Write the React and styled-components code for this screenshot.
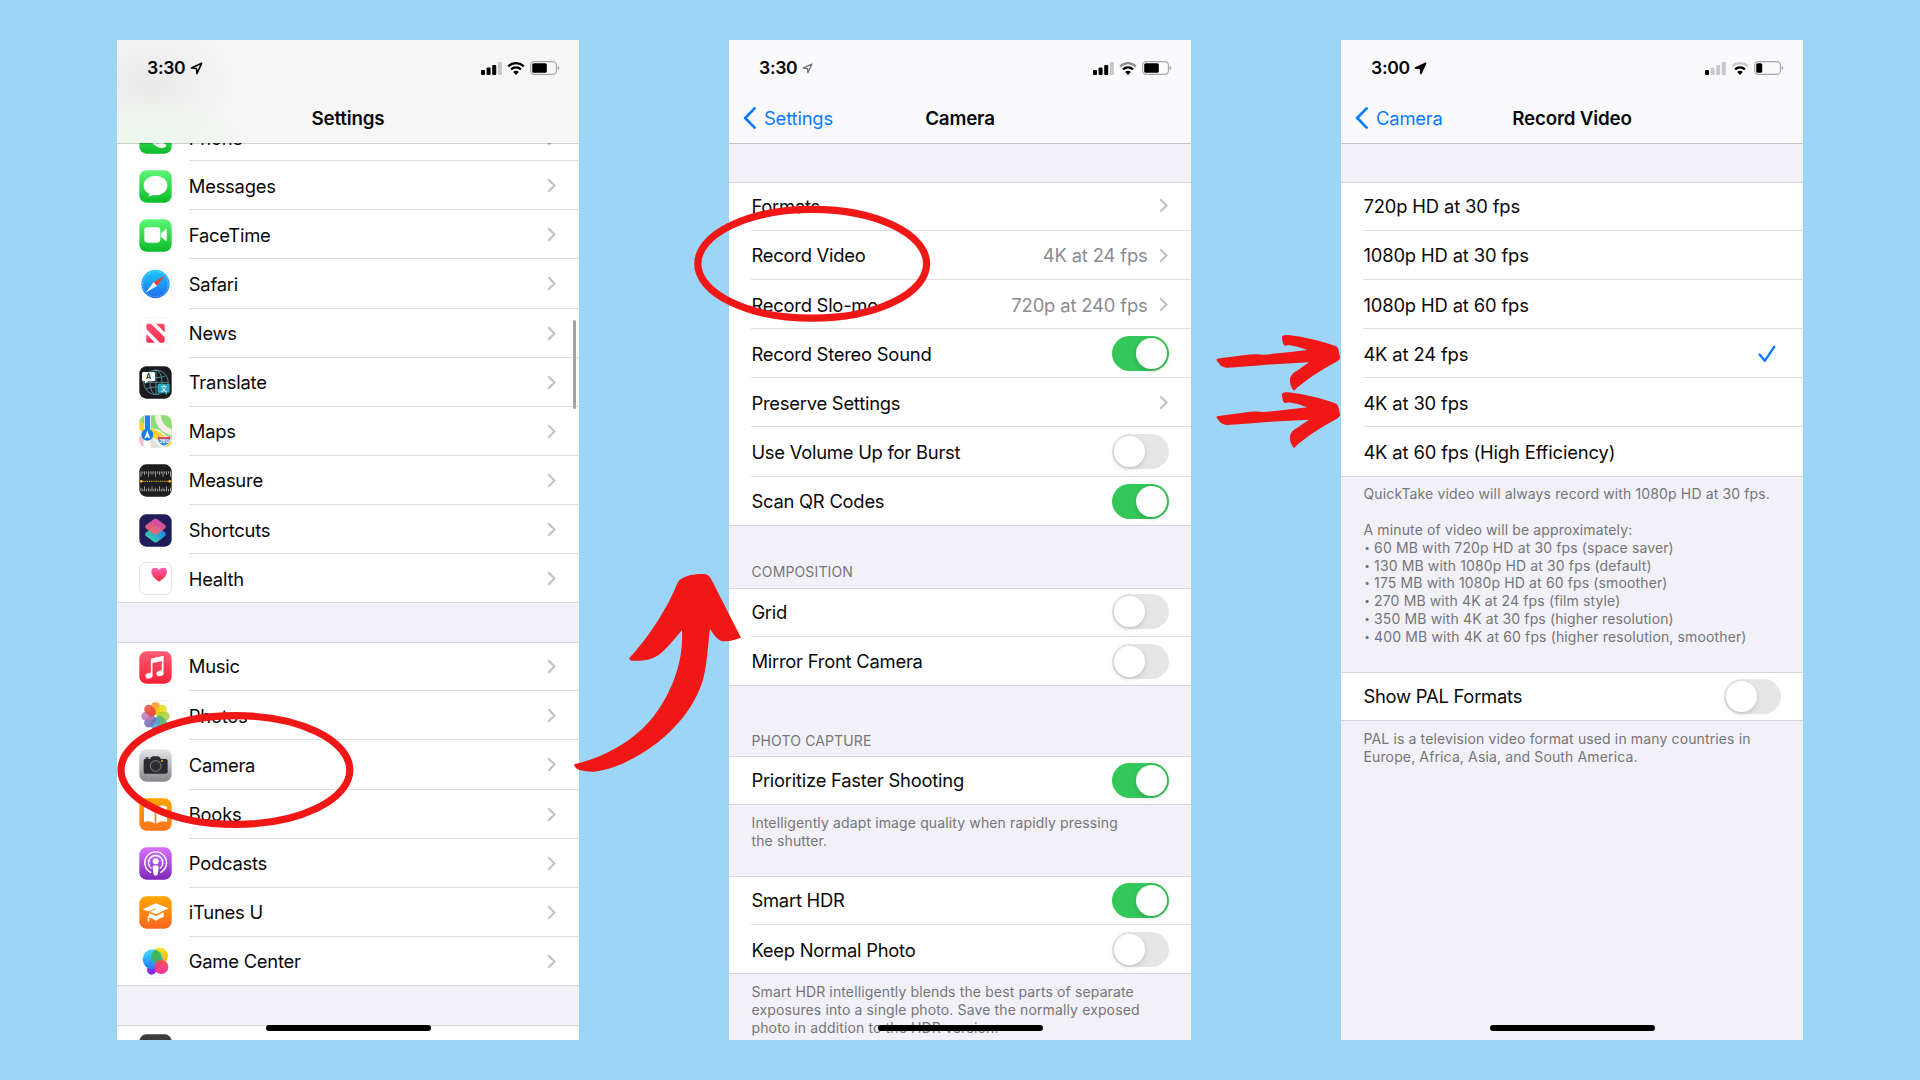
import React from "react";
import styled, { createGlobalStyle, css } from "styled-components";

const GlobalStyle = createGlobalStyle`
  * { box-sizing: border-box; }
  body { margin: 0; background: #9dd5f7; }
`;

const ROW = 49.13;

const Canvas = styled.main`
  position: relative;
  width: 1920px;
  height: 1080px;
  padding: 40px 117px;
  display: flex;
  gap: 150px;
  overflow: hidden;
  background: #9dd5f7;
  color: #0a0a0a;
  font-family: Inter, "Liberation Sans", sans-serif;
`;

const Phone = styled.section`
  position: relative;
  flex: none;
  display: flex;
  flex-direction: column;
  width: 462px;
  height: 1000px;
  overflow: hidden;
  background: #f2f1f7;
`;

const Header = styled.header`
  position: relative;
  z-index: 1;
  flex: none;
  height: 104px;
  border-bottom: 1px solid rgba(0, 0, 0, 0.19);
  background: ${(p) =>
    p.$tinted
      ? `radial-gradient(ellipse 100px 50px at 34px 104px, #e9f8ea 0%, rgba(233,248,234,0) 100%),
         radial-gradient(ellipse 80px 60px at 36px 44px, #ebe9e9 0%, rgba(235,233,233,0) 100%), #f6f6f6`
      : "#fafafc"};
  background-clip: padding-box;
`;

const StatusBar = styled.div`
  display: flex;
  align-items: center;
  height: 56px;
  padding: 0 19px 0 30px;
`;

const Time = styled.span`
  width: 43px;
  font-size: 17.6px;
  font-weight: 600;
  letter-spacing: -0.3px;
  line-height: 20px;
`;

const StatusIcons = styled.div`
  display: flex;
  align-items: center;
  gap: 5px;
  margin-left: auto;
`;

const NavBar = styled.div`
  display: grid;
  grid-template-columns: 1fr auto 1fr;
  align-items: center;
  height: 44px;
`;

const Title = styled.h1`
  grid-column: 2;
  margin: 0;
  padding-top: 2px;
  font-size: 18.8px;
  font-weight: 600;
  letter-spacing: -0.2px;
  line-height: 24px;
`;

const Back = styled.span`
  display: flex;
  align-items: center;
  gap: 8px;
  padding-left: 14px;
  color: #0a7aff;
  font-size: 18.4px;
  letter-spacing: -0.18px;
  line-height: 24px;
`;

const Group = styled.div`
  flex: none;
  margin-top: ${(p) => p.$offset || 0}px;
  background: #fff;
`;

const RowBody = styled.div`
  flex: 1;
  display: flex;
  align-items: center;
  height: 100%;
  padding: 1px 22px 0 0;
`;

const AppIcon = styled.svg`
  flex: none;
  width: 33px;
  height: 33px;
  margin: 1px 16.4px 0 0;
`;

const Row = styled.div`
  display: flex;
  align-items: center;
  height: ${ROW}px;
  padding-left: 22.4px;
  ${RowBody} {
    border-bottom: 1px solid #dededf;
  }
  &:first-child {
    border-top: 1px solid #d6d6da;
    ${RowBody} {
      padding: ${(p) => (p.$tucked ? "3px 22px 0 0" : "0 22px 1px 0")};
    }
  }
  &:last-child {
    border-bottom: 1px solid #d6d6da;
    ${RowBody} {
      border-bottom: 0;
    }
  }
`;

const Label = styled.span`
  font-size: 18.4px;
  letter-spacing: ${(p) => (p.$numeric ? -0.15 : -0.24)}px;
  line-height: 24px;
  white-space: nowrap;
`;

const Value = styled(Label)`
  margin-left: auto;
  margin-right: 11.4px;
  color: #8c8c90;
`;

const Trailing = styled.span`
  display: flex;
  margin-left: ${(p) => (p.$tight ? 0 : "auto")};
  margin-right: ${(p) => p.$inset || 0}px;
`;

const Switch = styled.span`
  display: flex;
  align-items: center;
  justify-content: ${(p) => (p.$on ? "flex-end" : "flex-start")};
  width: 57px;
  height: 35px;
  padding: 2px;
  border-radius: 18px;
  background: ${(p) => (p.$on ? "#34c759" : "#e6e6e6")};
`;

const Knob = styled.span`
  width: 31px;
  height: 31px;
  border-radius: 50%;
  background: #fff;
  box-shadow: 0 2px 5px rgba(0, 0, 0, 0.16);
`;

const Spacer = styled.div`
  flex: none;
  height: ${(p) => p.$h}px;
`;

const noteText = css`
  color: #75757a;
  font-size: 14px;
  line-height: 17.87px;
`;

const SectionTitle = styled.h2`
  ${noteText}
  flex: none;
  display: flex;
  align-items: flex-end;
  height: ${(p) => p.$h}px;
  margin: 0;
  padding: 0 22.5px 6.6px;
  font-weight: 400;
  letter-spacing: 0.13px;
  text-transform: uppercase;
`;

const Note = styled.div`
  ${noteText}
  flex: none;
  height: ${(p) => (p.$h ? `${p.$h}px` : "auto")};
  padding: 8.6px 0 0 22.5px;
  letter-spacing: 0.13px;
  white-space: pre;
`;

const NoteLine = styled.div`
  display: flex;
  align-items: center;
  height: 17.87px;
`;

const Bullet = styled.span`
  width: 10.6px;
  padding-left: 0.8px;
  font-size: 10px;
`;

const HomeIndicator = styled.div`
  position: absolute;
  left: 148.7px;
  bottom: 9px;
  z-index: 2;
  width: 165px;
  height: 6px;
  border-radius: 3px;
  background: #000;
`;

const ScrollThumb = styled.div`
  position: absolute;
  right: 3px;
  top: 280px;
  width: 3px;
  height: 89px;
  border-radius: 2px;
  background: #a3a3a5;
`;

const Markup = styled.svg`
  position: absolute;
  inset: 0;
  z-index: 3;
  width: 1920px;
  height: 1080px;
`;

const Chevron = () => (
  <svg width="9" height="15" viewBox="0 0 9 15">
    <path d="M1.2 1.2 L7.6 7.5 L1.2 13.8" fill="none" stroke="#c2c2c5" strokeWidth="2.1" />
  </svg>
);

const BackChevron = () => (
  <svg width="13" height="22" viewBox="0 0 13 22">
    <path d="M11.6 1.4 L2.2 11 L11.6 20.6" fill="none" stroke="#0a7aff" strokeWidth="2.7" strokeLinecap="round" strokeLinejoin="round" />
  </svg>
);

const Check = () => (
  <svg width="18" height="18" viewBox="0 0 18 18">
    <path d="M1.6 9.6 L6.8 15.8 L16.2 1.8" fill="none" stroke="#0a7aff" strokeWidth="2.4" strokeLinecap="round" strokeLinejoin="round" />
  </svg>
);

const LocationArrow = ({ kind }) => {
  const small = kind === "faint";
  return (
    <svg width={small ? 11 : 13} height={small ? 11 : 13} viewBox="0 0 13 13">
      <path
        d="M11.7 1.2 L1.4 6 L6.5 6.6 L6.9 11.6 Z"
        fill={kind === "solid" ? "#000" : "none"}
        stroke={small ? "#6c6c6e" : "#000"}
        strokeWidth="1.5"
        strokeLinejoin="round"
      />
    </svg>
  );
};

const Signal = ({ bars }) => (
  <svg width="21" height="13" viewBox="0 0 21 13">
    {[5, 7.5, 10, 13].map((h, i) => (
      <rect key={h} x={i * 5.6} y={13 - h} width="4" height={h} rx="1" fill={i < bars ? "#000" : "#c8c8ca"} />
    ))}
  </svg>
);

const Wifi = ({ outer }) => (
  <svg width="18" height="13" viewBox="0 0 18 13">
    <path d="M1.2 4.3 A11.2 11.2 0 0 1 16.8 4.3" fill="none" stroke={outer} strokeWidth="2.3" />
    <path d="M4 7.4 A7.2 7.2 0 0 1 14 7.4" fill="none" stroke="#000" strokeWidth="2.2" />
    <path d="M9 13 L6.2 10.1 A4 4 0 0 1 11.8 10.1 Z" fill="#000" />
  </svg>
);

const Battery = ({ level }) => (
  <svg width="30" height="14" viewBox="0 0 30 14">
    <rect x="0.6" y="0.6" width="25.8" height="12.8" rx="3.6" fill="none" stroke="#a6a6a8" strokeWidth="1.1" />
    <rect x="2.2" y="2.2" width={level} height="9.6" rx="1.6" fill="#000" />
    <path d="M27.6 4.8 Q29.4 5.6 29.4 7 Q29.4 8.4 27.6 9.2 Z" fill="#a6a6a8" />
  </svg>
);

const Gradient = ({ id, from, to }) => (
  <linearGradient id={id} x1="0" y1="0" x2="0" y2="1">
    <stop offset="0" stopColor={from} />
    <stop offset="1" stopColor={to} />
  </linearGradient>
);

const Tile = ({ fill, stroke }) => (
  <rect x="1" y="1" width="97" height="97" rx="21" fill={fill} stroke={stroke} strokeWidth={stroke ? 2 : 0} />
);

const PETALS = ["#f7941d", "#e8d80c", "#a5cf3a", "#4fb26a", "#4c9fd6", "#7367b4", "#b277b5", "#ea4335"];
const TICKS = Array.from({ length: 17 }, (_, i) => i);

const ICONS = {
  phone: (
    <>
      <Gradient id="gPhone" from="#5ff777" to="#0bbb29" />
      <Tile fill="url(#gPhone)" />
      <path d="M20 26 Q30 14 38 30 Q42 38 36 42 Q44 58 56 68 Q64 62 72 66 Q88 72 78 79 Q62 86 42 68 Q16 44 20 26Z" fill="#fff" />
    </>
  ),
  messages: (
    <>
      <Gradient id="gMsg" from="#5ff777" to="#0bbb29" />
      <Tile fill="url(#gMsg)" />
      <ellipse cx="49.5" cy="46.5" rx="35.5" ry="29.5" fill="#fff" />
      <path d="M32 66 Q33 75 26 79 Q38 80 46 72Z" fill="#fff" />
    </>
  ),
  facetime: (
    <>
      <Gradient id="gFace" from="#5ff777" to="#0bbb29" />
      <Tile fill="url(#gFace)" />
      <rect x="16" y="25" width="48" height="46" rx="10" fill="#fff" />
      <path d="M66 43 L80 31 Q83 29 83 33 V63 Q83 67 80 65 L66 53Z" fill="#fff" />
    </>
  ),
  safari: (
    <>
      <Gradient id="gSafari" from="#1cc8fb" to="#1c6cf0" />
      <Tile fill="#fff" stroke="#efefef" />
      <circle cx="49.5" cy="48" r="42.5" fill="url(#gSafari)" />
      <circle cx="49.5" cy="48" r="38" fill="none" stroke="#bfe5ff" strokeWidth="4" strokeDasharray="1.2 3.2" opacity="0.75" />
      <path d="M79 22 L44 43 L54 53Z" fill="#fb3a30" />
      <path d="M20 74 L44 43 L54 53Z" fill="#fff" />
    </>
  ),
  news: (
    <>
      <Gradient id="gNews" from="#fc4f70" to="#fb2f52" />
      <Tile fill="#fff" stroke="#f0f0f0" />
      <g fill="url(#gNews)">
        <path d="M22 25 Q22 20 27 20 H36 L77 61 V71 Q77 77 72 77 H63 L22 36Z" />
        <path d="M51 20 H72 Q77 20 77 25 V46Z" />
        <path d="M22 51 L48 77 H27 Q22 77 22 72Z" />
      </g>
    </>
  ),
  translate: (
    <>
      <Tile fill="#1b1b1d" />
      <g fill="none" stroke="#55a0ae" strokeWidth="2.4">
        <circle cx="51" cy="49" r="37" />
        <ellipse cx="51" cy="49" rx="18" ry="37" />
        <path d="M51 12 V86 M14 49 H88 M22 30 Q51 40 80 30 M22 68 Q51 58 80 68" />
      </g>
      <path d="M13 18 H44 Q48 18 48 22 V42 Q48 46 44 46 H28 L18 53 V46 H13 Q9 46 9 42 V22 Q9 18 13 18Z" fill="#fff" />
      <text x="28.5" y="40" fontSize="21" fontWeight="600" textAnchor="middle" fill="#222">A</text>
      <path d="M60 53 H88 Q92 53 92 57 V76 Q92 80 88 80 H84 V88 L76 80 H60 Q56 80 56 76 V57 Q56 53 60 53Z" fill="#2ba7bd" />
      <text x="74" y="74" fontSize="19" textAnchor="middle" fill="#fff" fontFamily='"Noto Sans CJK SC", sans-serif'>文</text>
    </>
  ),
  maps: (
    <>
      <clipPath id="cMaps"><rect x="1" y="1" width="97" height="97" rx="21" /></clipPath>
      <g clipPath="url(#cMaps)">
        <rect width="99" height="99" fill="#f3f2ee" />
        <path d="M0 0 H20 V34 L0 18Z" fill="#8ddb72" />
        <path d="M36 0 H99 V76 L60 44 L36 40Z" fill="#8fdc74" />
        <path d="M0 62 L14 70 V99 H0Z" fill="#f8bccb" />
        <path d="M35 62 L66 99 H35Z" fill="#e3e1dc" />
        <path d="M0 14 L20 34 L60 50 L99 80 V99 H88 L36 62 L0 44Z" fill="#fbcf2d" />
        <path d="M56 0 Q60 42 99 52" fill="none" stroke="#f4f1ea" strokeWidth="18" />
        <rect x="14" y="60" width="20" height="39" fill="#fff" />
        <rect x="17" y="0" width="17" height="58" fill="#1b85e8" stroke="#fff" strokeWidth="2" />
        <circle cx="25" cy="59" r="18" fill="#1680e4" />
        <path d="M25 46 L34 71 L25 66 L16 71Z" fill="#fff" />
        <path d="M57 64 Q75 70 93 64 Q98 86 75 94 Q52 86 57 64Z" fill="#3c8fdb" stroke="#fff" strokeWidth="2.5" />
        <path d="M57 64 Q75 70 93 64 L94 73 H56Z" fill="#d8485a" />
        <text x="75" y="85" fontSize="14" fontWeight="700" textAnchor="middle" fill="#fff">280</text>
      </g>
    </>
  ),
  measure: (
    <>
      <Tile fill="#1d1d1d" />
      {TICKS.map((i) => (
        <g key={i} fill="#dcdcdc">
          <rect x={5 + i * 5.5} y="22" width="2" height={i % 4 === 0 ? 16 : i % 2 ? 7 : 11} />
          <rect x={5 + i * 5.5} y={i % 4 === 2 ? 67 : i % 2 ? 75 : 71} width="2" height={i % 4 === 2 ? 15 : i % 2 ? 7 : 11} />
        </g>
      ))}
      <path d="M8 52 H92" stroke="#d9ac12" strokeWidth="4" strokeDasharray="3 2.5" />
      <circle cx="7" cy="52" r="4" fill="#f7c61b" />
      <circle cx="92" cy="52" r="4" fill="#f7c61b" />
    </>
  ),
  shortcuts: (
    <>
      <linearGradient id="gShA" x1="0.7" y1="0" x2="0.2" y2="1">
        <stop offset="0" stopColor="#e04fc8" />
        <stop offset="1" stopColor="#f8704e" />
      </linearGradient>
      <linearGradient id="gShB" x1="0.9" y1="0.2" x2="0.2" y2="0.9">
        <stop offset="0" stopColor="#1d7df5" />
        <stop offset="1" stopColor="#3ed6a3" />
      </linearGradient>
      <Tile fill="#201c58" />
      <path d="M22 55 L44 38 Q50 34 56 38 L77 55 Q84 61 77 67 L56 83 Q50 88 44 83 L22 67 Q15 61 22 55Z" fill="url(#gShB)" />
      <path d="M22 32 L44 16 Q50 11 56 16 L77 32 Q84 38 77 44 L56 60 Q50 65 44 60 L22 44 Q15 38 22 32Z" fill="url(#gShA)" opacity="0.9" />
    </>
  ),
  health: (
    <>
      <Gradient id="gHealth" from="#fb5fb4" to="#fb2b3c" />
      <Tile fill="#fff" stroke="#d4d4d6" />
      <path d="M60 59 Q37 44 37 29 Q37 17 48 17 Q56 17 60 24 Q64 17 73 17 Q84 17 84 29 Q84 44 60 59Z" fill="url(#gHealth)" />
    </>
  ),
  music: (
    <>
      <Gradient id="gMusic" from="#fb5c74" to="#fa2138" />
      <Tile fill="url(#gMusic)" />
      <path d="M38 26 L71 18 V63" fill="none" stroke="#fff" strokeWidth="5" />
      <path d="M36 23 L73 15 V29 L36 37Z" fill="#fff" />
      <path d="M38 30 V72" stroke="#fff" strokeWidth="5" />
      <ellipse cx="30" cy="74" rx="11" ry="8.5" fill="#fff" transform="rotate(-18 30 74)" />
      <ellipse cx="63" cy="67" rx="11" ry="8.5" fill="#fff" transform="rotate(-18 63 67)" />
    </>
  ),
  photos: (
    <>
      <Tile fill="#fff" stroke="#efefef" />
      {PETALS.map((c, i) => (
        <rect key={c} x="36" y="6" width="27" height="39" rx="13.5" fill={c} opacity="0.84" transform={`rotate(${i * 45} 49.5 48.5)`} />
      ))}
    </>
  ),
  camera: (
    <>
      <Gradient id="gCam" from="#e4e4e8" to="#88878c" />
      <Tile fill="url(#gCam)" />
      <path d="M18 30 H33 Q36 22 42 22 H58 Q62 22 66 30 H81 Q86 30 86 35 V69 Q86 74 81 74 H18 Q14 74 14 69 V35 Q14 30 18 30Z" fill="#2c2c2e" />
      <rect x="19" y="25" width="10" height="4" rx="1" fill="#2c2c2e" />
      <circle cx="50" cy="51" r="16" fill="#2c2c2e" stroke="#97979a" strokeWidth="2.4" />
      <circle cx="69" cy="36" r="2.8" fill="#f7c61b" />
    </>
  ),
  books: (
    <>
      <Gradient id="gBooks" from="#ffa300" to="#fc741d" />
      <Tile fill="url(#gBooks)" />
      <path d="M47 30 Q32 15 15 27 V72 Q33 66 47 77Z M52 30 Q67 15 84 27 V72 Q66 66 52 77Z" fill="#fff" />
    </>
  ),
  podcasts: (
    <>
      <Gradient id="gPod" from="#d873fb" to="#7d27b9" />
      <Tile fill="url(#gPod)" />
      <g fill="none" stroke="#fff" strokeWidth="4.4" strokeLinecap="round">
        <path d="M35 76 A32.5 32.5 0 1 1 65 76" />
        <path d="M36 63 A21.5 21.5 0 1 1 64 63" />
      </g>
      <circle cx="50" cy="43" r="9" fill="#fff" />
      <path d="M41 62 Q41 55 50 55 Q59 55 59 62 L56.5 80 Q55 86 50 86 Q45 86 43.5 80Z" fill="#fff" />
    </>
  ),
  itunesu: (
    <>
      <Gradient id="gItu" from="#ffa700" to="#fa641f" />
      <Tile fill="url(#gItu)" />
      <path d="M50 22 L89 37 L51 55 L11 40Z" fill="#fff" />
      <path d="M29 51 L51 60 L74 49 V63 Q61 66 50 74 Q41 67 29 64Z" fill="#fff" />
      <path d="M49 39 L28 48 V76" fill="none" stroke="#f98a10" strokeWidth="3" />
      <path d="M26 60 L31 60 V78 L26 76Z" fill="#fff" />
    </>
  ),
  gamecenter: (
    <>
      <Gradient id="gGcA" from="#3fe0fa" to="#2377fb" />
      <Gradient id="gGcB" from="#fbe51b" to="#f6a71a" />
      <Gradient id="gGcC" from="#fb4a55" to="#fb1f96" />
      <Tile fill="#fff" stroke="#efefef" />
      <circle cx="38" cy="75" r="14" fill="#8a2be8" />
      <circle cx="62" cy="33" r="25" fill="url(#gGcB)" />
      <circle cx="41" cy="43" r="30" fill="url(#gGcA)" />
      <path d="M39 23 A25 25 0 0 0 60 58 A30 30 0 0 0 58 18 Q46 12 39 23Z" fill="#3fb54e" opacity="0.9" />
      <circle cx="67" cy="66" r="21" fill="url(#gGcC)" opacity="0.93" />
    </>
  ),
  provider: (
    <>
      <Tile fill="#3c3c3e" />
      <path d="M44 20 H70" stroke="#e8e8e8" strokeWidth="4" />
    </>
  ),
};

const Toggle = ({ on }) => (
  <Switch $on={on}>
    <Knob />
  </Switch>
);

const StatusLine = ({ time, arrow, bars, wifi, battery }) => (
  <StatusBar>
    <Time>{time}</Time>
    <LocationArrow kind={arrow} />
    <StatusIcons>
      <Signal bars={bars} />
      <Wifi outer={wifi} />
      <Battery level={battery} />
    </StatusIcons>
  </StatusBar>
);

const NavHeader = ({ tinted, title, back, status }) => (
  <Header $tinted={tinted}>
    <StatusLine {...status} />
    <NavBar>
      {back && (
        <Back>
          <BackChevron />
          {back}
        </Back>
      )}
      <Title>{title}</Title>
    </NavBar>
  </Header>
);

const INSETS = { link: 1, check: 4.6 };

const SettingRow = ({ icon, label, value, control, tucked }) => (
  <Row $tucked={tucked}>
    {icon && <AppIcon viewBox="0 0 99 99">{ICONS[icon]}</AppIcon>}
    <RowBody>
      <Label $numeric={/\d/.test(label)}>{label}</Label>
      {value && <Value $numeric>{value}</Value>}
      {control && (
        <Trailing $tight={Boolean(value)} $inset={INSETS[control]}>
          {control === "link" && <Chevron />}
          {control === "on" && <Toggle on />}
          {control === "off" && <Toggle />}
          {control === "check" && <Check />}
        </Trailing>
      )}
    </RowBody>
  </Row>
);

const List = ({ offset, rows }) => (
  <Group $offset={offset}>
    {rows.map((r) => (
      <SettingRow key={r.label} {...r} />
    ))}
  </Group>
);

const link = (icon, label) => ({ icon, label, control: "link" });

const APPS = [
  { ...link("phone", "Phone"), tucked: true },
  link("messages", "Messages"),
  link("facetime", "FaceTime"),
  link("safari", "Safari"),
  link("news", "News"),
  link("translate", "Translate"),
  link("maps", "Maps"),
  link("measure", "Measure"),
  link("shortcuts", "Shortcuts"),
  link("health", "Health"),
];

const MEDIA = [
  link("music", "Music"),
  link("photos", "Photos"),
  link("camera", "Camera"),
  link("books", "Books"),
  link("podcasts", "Podcasts"),
  link("itunesu", "iTunes U"),
  link("gamecenter", "Game Center"),
];

const CAMERA = [
  { label: "Formats", control: "link" },
  { label: "Record Video", value: "4K at 24 fps", control: "link" },
  { label: "Record Slo-mo", value: "720p at 240 fps", control: "link" },
  { label: "Record Stereo Sound", control: "on" },
  { label: "Preserve Settings", control: "link" },
  { label: "Use Volume Up for Burst", control: "off" },
  { label: "Scan QR Codes", control: "on" },
];

const MODES = [
  { label: "720p HD at 30 fps" },
  { label: "1080p HD at 30 fps" },
  { label: "1080p HD at 60 fps" },
  { label: "4K at 24 fps", control: "check" },
  { label: "4K at 30 fps" },
  { label: "4K at 60 fps (High Efficiency)" },
];

const SIZES = [
  "60 MB with 720p HD at 30 fps (space saver)",
  "130 MB with 1080p HD at 30 fps (default)",
  "175 MB with 1080p HD at 60 fps (smoother)",
  "270 MB with 4K at 24 fps (film style)",
  "350 MB with 4K at 30 fps (higher resolution)",
  "400 MB with 4K at 60 fps (higher resolution, smoother)",
];

const SMALL_ARROW =
  "M49 150 Q50 145 60 145 L130 136 Q160 131 190 134 Q260 128 322 120 Q290 108 265 105 Q254 110 250 103 Q244 85 247 78 Q255 72 285 78 C330 84 380 98 409 109 Q418 117 417 130 L421 143 Q418 151 408 156 C370 175 310 215 282 242 Q268 228 270 205 Q275 190 290 183 L327 157 L200 164 Q130 170 80 173 Q65 172 58 162 Z";

const BIG_ARROW =
  "M42 673 C130 652 220 605 280 530 C330 465 372 370 366 270 C340 302 315 330 300 342 C275 362 240 364 215 362 Q207 360 208 354 C260 300 320 210 352 130 Q357 118 368 114 C390 103 410 102 435 102 Q447 104 455 120 L543 293 Q515 304 490 304 C475 303 463 287 450 266 C444 310 442 370 430 415 C410 490 355 560 290 610 C230 655 160 690 100 695 Q70 695 52 688 Q43 682 42 673Z";

export default function App() {
  return (
    <>
      <GlobalStyle />
      <Canvas>
        <Phone>
          <NavHeader
            tinted
            title="Settings"
            status={{ time: "3:30", arrow: "outline", bars: 3, wifi: "#000", battery: 14.6 }}
          />
          <List offset={-32} rows={APPS} />
          <Spacer $h={38.9} />
          <List rows={MEDIA} />
          <Spacer $h={39} />
          <List rows={[{ icon: "provider", label: "" }]} />
          <ScrollThumb />
          <HomeIndicator />
        </Phone>

        <Phone>
          <NavHeader
            back="Settings"
            title="Camera"
            status={{ time: "3:30", arrow: "faint", bars: 3, wifi: "#8a8a8c", battery: 14.6 }}
          />
          <Spacer $h={37.8} />
          <List rows={CAMERA} />
          <SectionTitle $h={61.9}>Composition</SectionTitle>
          <List rows={[{ label: "Grid", control: "off" }, { label: "Mirror Front Camera", control: "off" }]} />
          <SectionTitle $h={70.3}>Photo Capture</SectionTitle>
          <List rows={[{ label: "Prioritize Faster Shooting", control: "on" }]} />
          <Note $h={70.9}>{"Intelligently adapt image quality when rapidly pressing\nthe shutter."}</Note>
          <List rows={[{ label: "Smart HDR", control: "on" }, { label: "Keep Normal Photo", control: "off" }]} />
          <Note>
            {"Smart HDR intelligently blends the best parts of separate\nexposures into a single photo. Save the normally exposed\nphoto in addition to the HDR version."}
          </Note>
          <HomeIndicator />
        </Phone>

        <Phone>
          <NavHeader
            back="Camera"
            title="Record Video"
            status={{ time: "3:00", arrow: "solid", bars: 1, wifi: "#c8c8ca", battery: 6 }}
          />
          <Spacer $h={37.8} />
          <List rows={MODES} />
          <Note $h={195.8}>
            <NoteLine>QuickTake video will always record with 1080p HD at 30 fps.</NoteLine>
            <NoteLine />
            <NoteLine>A minute of video will be approximately:</NoteLine>
            {SIZES.map((size) => (
              <NoteLine key={size}>
                <Bullet>•</Bullet>
                {size}
              </NoteLine>
            ))}
          </Note>
          <List rows={[{ label: "Show PAL Formats", control: "off" }]} />
          <Note>{"PAL is a television video format used in many countries in\nEurope, Africa, Asia, and South America."}</Note>
          <HomeIndicator />
        </Phone>

        <Markup viewBox="0 0 1920 1080">
          <g fill="none" stroke="#f01716" strokeWidth="7.2">
            <ellipse cx="235.4" cy="770" rx="114.4" ry="54.4" />
            <ellipse cx="812.2" cy="263.8" rx="114.4" ry="54.4" />
          </g>
          <g fill="#f01716">
            <path d={BIG_ARROW} transform="translate(560 540) scale(0.33333)" />
            <path d={SMALL_ARROW} transform="translate(1200 310) scale(0.33333)" />
            <path d={SMALL_ARROW} transform="translate(1200 367.3) scale(0.33333)" />
          </g>
        </Markup>
      </Canvas>
    </>
  );
}
